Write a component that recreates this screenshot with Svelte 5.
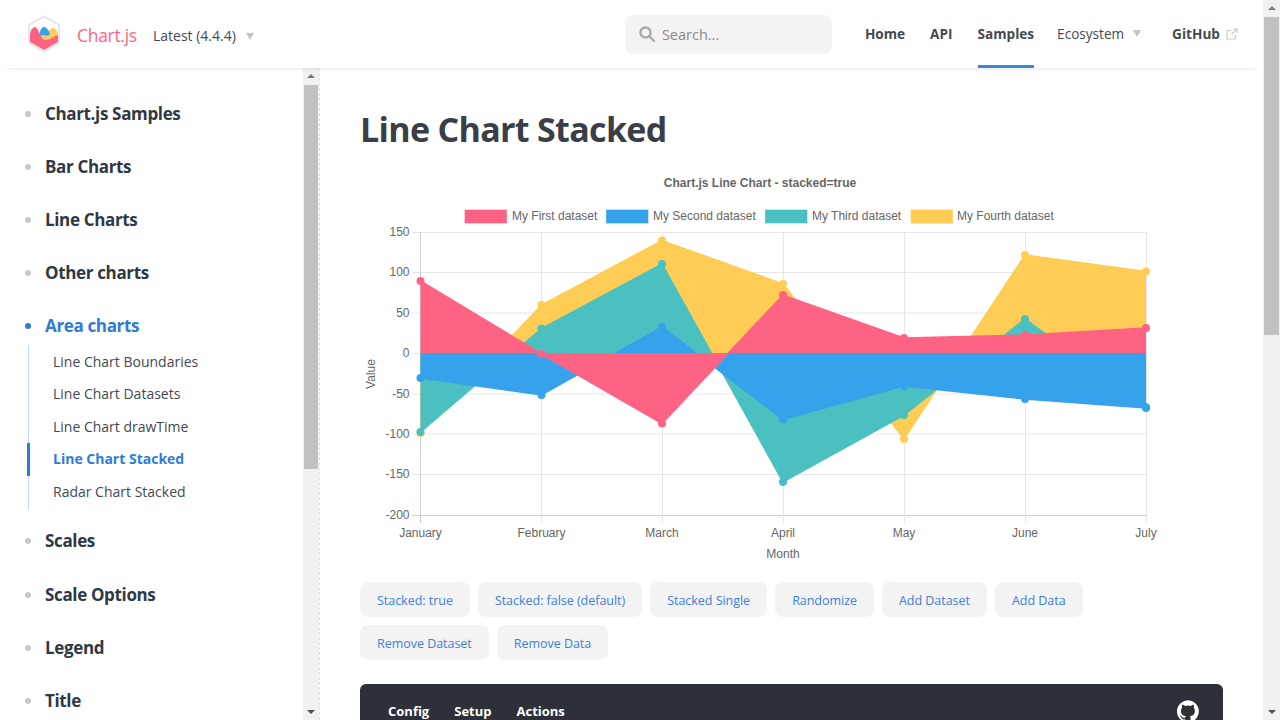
<script>
  const xs = [420.5, 541.5, 662, 783, 904, 1025, 1146];
  const ZERO = 353;
  const series = [
    { color: '#ffcd56', ys: [433, 305, 240.5, 284, 439, 255, 271.5] },
    { color: '#4bc0c0', ys: [432, 328.5, 264, 482, 415, 319, 407] },
    { color: '#36a2eb', ys: [378, 395, 327, 419.5, 386, 399, 408] },
    { color: '#ff6384', ys: [281, 354, 423.5, 295, 338, 335, 328] }
  ];
  const line = (ys) => ys.map((y, i) => `${xs[i]},${y}`).join(' ');
  const area = (ys) => `${xs[0]},${ZERO} ${line(ys)} ${xs[6]},${ZERO}`;
  const yTicks = [
    ['150', 232.5], ['100', 272.5], ['50', 313], ['0', 353.5],
    ['-50', 394], ['-100', 434], ['-150', 474.5], ['-200', 515.5]
  ];
  const months = ['January', 'February', 'March', 'April', 'May', 'June', 'July'];
  const legend = [
    ['My First dataset', '#ff6384', 464.5, 512],
    ['My Second dataset', '#36a2eb', 606, 653],
    ['My Third dataset', '#4bc0c0', 765, 812],
    ['My Fourth dataset', '#ffcd56', 910.5, 957]
  ];
  const topItems = ['Chart.js Samples', 'Bar Charts', 'Line Charts', 'Other charts'];
  const subItems = ['Line Chart Boundaries', 'Line Chart Datasets', 'Line Chart drawTime', 'Line Chart Stacked', 'Radar Chart Stacked'];
  const bottomItems = ['Scales', 'Scale Options', 'Legend', 'Title'];
  const buttons = ['Stacked: true', 'Stacked: false (default)', 'Stacked Single', 'Randomize', 'Add Dataset', 'Add Data', 'Remove Dataset', 'Remove Data'];
</script>

<div class="page">
  <div class="view">
    <header class="navbar">
      <div class="logo">
        <svg width="34" height="38" viewBox="0 0 34 38">
          <path d="M17 1.500 32 10v18L17 36.500 2 28V10Z" fill="#fff" stroke="#e4e6ea" stroke-width="2" />
          <path d="M12 20C14 17 15 16 18 20 21 18 23 13 26 13 29 13 31 17 31 22L17 30Z" fill="#fecc56" />
          <path d="M12 21C13 15 15 12 17 12 20 12 22 16 23 19 21 21 19 21 17 20 15 20 14 21 12 21Z" fill="#36a2eb" />
          <path d="M3 27V19C4 14 6 12 8 12 11 12 13 22 17 25 21 26 26 22 31 20V27L17 35Z" fill="#ff6384" />
        </svg>
      </div>
      <span class="brand">Chart.js</span>
      <span class="version">Latest (4.4.4)</span>
      <span class="caret version-caret"></span>
      <div class="search">
        <svg width="16" height="16" viewBox="0 0 16 16" fill="none" stroke="#a8a8a8" stroke-width="2.4">
          <circle cx="6.500" cy="6.500" r="5" />
          <path d="m10.500 10.500 4.500 4.500" stroke-linecap="round" />
        </svg>
        <span>Search...</span>
      </div>
      <nav class="links">
        <span class="link">Home</span>
        <span class="link">API</span>
        <span class="link active">Samples</span>
        <span class="link plain">Ecosystem<span class="caret eco-caret"></span></span>
        <span class="link">GitHub
          <svg class="ext" width="12" height="12" viewBox="0 0 12 12" fill="none" stroke="#c8c8c8" stroke-width="1.2">
            <path d="M9.500 7v4H1V2.500h4M7 1h4v4M11 1 5.500 6.500" />
          </svg>
        </span>
      </nav>
    </header>

    <div class="body">
      <aside class="sidebar">
        <div class="side-list">
          <ul class="top">
            {#each topItems as item}
              <li>{item}</li>
            {/each}
            <li class="current">Area charts</li>
          </ul>
          <ul class="sub">
            {#each subItems as item, i}
              <li class:on={i === 3}>{item}</li>
            {/each}
          </ul>
          <ul class="top lower">
            {#each bottomItems as item}
              <li>{item}</li>
            {/each}
          </ul>
        </div>
        <div class="side-scroll">
          <span class="arrow up"></span>
          <span class="side-thumb"></span>
          <span class="arrow down"></span>
        </div>
      </aside>

      <main class="content">
        <h1>Line Chart Stacked</h1>
        <svg class="chart" width="863" height="400" viewBox="360 170 863 400">
          <text class="title" x="760" y="187" text-anchor="middle">Chart.js Line Chart - stacked=true</text>
          {#each legend as [label, color, bx, tx]}
            <rect x={bx} y="209.5" width="42.500" height="14" fill={color} stroke="#fff" stroke-opacity=".35" />
            <text class="lbl" x={tx} y="220">{label}</text>
          {/each}

          {#each yTicks as [label, y]}
            <line x1="412" x2="1146.500" y1={y} y2={y} class={label === '-200' ? 'edge' : 'grid'} />
            <text class="lbl" x="409.500" y={y + 3.500} text-anchor="end">{label}</text>
          {/each}
          {#each months as m, i}
            <line x1={Math.floor(xs[i]) + 0.5} x2={Math.floor(xs[i]) + 0.5} y1="232" y2="523" class={i === 0 ? 'edge' : 'grid'} />
            <text class="lbl" x={xs[i]} y="537" text-anchor="middle">{m}</text>
          {/each}
          <text class="lbl" x="783" y="558" text-anchor="middle">Month</text>
          <text class="lbl" transform="translate(375 374) rotate(-90)" text-anchor="middle">Value</text>

          {#each series as s}
            <polygon points={area(s.ys)} fill={s.color} />
            <polyline points={line(s.ys)} fill="none" stroke={s.color} stroke-width="1.500" />
            {#each s.ys as y, i}
              <circle cx={xs[i]} cy={y} r="4" fill={s.color} />
            {/each}
          {/each}
        </svg>

        <div class="buttons">
          {#each buttons as b}
            <button type="button">{b}</button>
          {/each}
        </div>

        <div class="code">
          <span>Config</span>
          <span>Setup</span>
          <span>Actions</span>
          <svg class="gh" width="22" height="22" viewBox="0 0 24 24" fill="#fff">
            <path d="M12 .3a12 12 0 0 0-3.800 23.400c.6.1.8-.3.8-.6v-2c-3.300.7-4-1.600-4-1.600-.6-1.400-1.400-1.800-1.400-1.800-1.100-.7.1-.7.1-.7 1.200.1 1.800 1.200 1.800 1.200 1.100 1.800 2.800 1.300 3.500 1 .1-.8.400-1.300.8-1.600-2.700-.3-5.500-1.300-5.500-5.900 0-1.300.5-2.400 1.200-3.200-.1-.3-.5-1.500.1-3.200 0 0 1-.3 3.300 1.200a11.500 11.500 0 0 1 6 0c2.300-1.500 3.300-1.200 3.300-1.200.6 1.700.2 2.900.1 3.200.8.800 1.200 1.900 1.200 3.200 0 4.600-2.800 5.600-5.500 5.900.4.400.8 1.100.8 2.200v3.300c0 .3.200.7.800.6A12 12 0 0 0 12 .3Z" />
          </svg>
        </div>
      </main>
    </div>
  </div>

  <div class="page-scroll">
    <span class="arrow up"></span>
    <span class="page-thumb"></span>
    <span class="arrow down"></span>
  </div>
</div>

<style>
  :global(body) {
    margin: 0;
    background: #fff;
    overflow: hidden;
  }
  .page {
    display: flex;
    height: 720px;
    overflow: hidden;
    font-family: "Open Sans", "Noto Sans", sans-serif;
    color: #303846;
  }
  .view {
    flex: 1;
    min-width: 0;
    display: flex;
    flex-direction: column;
  }
  .navbar {
    height: 68px;
    flex: none;
    display: flex;
    align-items: center;
    padding-left: 27px;
    box-shadow: 0 5px 6px -7px rgba(0, 0, 0, 0.28);
    position: relative;
    z-index: 2;
    box-sizing: border-box;
    background: #fff;
  }
  .logo {
    display: flex;
    width: 50px;
  }
  .brand {
    color: #ff6384;
    font-size: 17.5px;
    font-weight: 500;
    letter-spacing: -0.3px;
    width: 76px;
    padding-top: 1px;
  }
  .version {
    font-size: 14px;
    font-weight: 500;
    color: #444950;
    padding-top: 3px;
  }
  .caret {
    display: inline-block;
    width: 0;
    height: 0;
    border-left: 4.5px solid transparent;
    border-right: 4.5px solid transparent;
    border-top: 7px solid #c4c4c4;
  }
  .version-caret {
    margin-left: 10px;
    margin-top: 4px;
  }
  .search {
    margin-left: 371px;
    width: 207px;
    height: 39px;
    border-radius: 8px;
    background: #f3f3f3;
    display: flex;
    align-items: center;
    gap: 7px;
    padding-left: 14px;
    box-sizing: border-box;
    font-size: 14.5px;
    color: #8a8a8a;
  }
  .links {
    margin-left: 33px;
    display: flex;
    align-self: stretch;
    gap: 25px;
    font-size: 13.6px;
    font-weight: 700;
    color: #444950;
  }
  .link {
    display: flex;
    align-items: center;
    border-bottom: 3px solid transparent;
    box-sizing: border-box;
    padding-top: 2px;
  }
  .link.active {
    border-bottom-color: #3d87d8;
  }
  .link.plain {
    font-weight: 400;
    width: 90px;
    margin-left: -2px;
  }
  .eco-caret {
    margin-left: 9px;
  }
  .ext {
    margin-left: 6px;
  }
  .body {
    flex: 1;
    min-height: 0;
    display: flex;
  }
  .sidebar {
    width: 320px;
    flex: none;
    display: flex;
    overflow: hidden;
    box-sizing: border-box;
    border-right: 1px dashed #e2e2e2;
  }
  .side-list {
    flex: 1;
    padding-top: 19px;
  }
  ul {
    list-style: none;
    margin: 0;
    padding: 0;
  }
  .top li {
    height: 53.100px;
    line-height: 53.100px;
    padding-left: 45px;
    font-size: 17px;
    font-weight: 700;
    letter-spacing: -0.35px;
    color: #303846;
    position: relative;
  }
  .top li::before {
    content: "";
    position: absolute;
    left: 25px;
    top: 24px;
    width: 6px;
    height: 6px;
    border-radius: 50%;
    background: #c8c8c8;
  }
  .top li.current {
    color: #2f7bd8;
  }
  .top li.current::before {
    background: #2f7bd8;
  }
  .sub {
    margin: -7px 0 5px 28px;
    padding-top: 0.5px;
    border-left: 1px solid #bcdcf5;
    height: 163.500px;
  }
  .sub li {
    height: 32.400px;
    line-height: 32.400px;
    padding-left: 24px;
    font-size: 14px;
    color: #444950;
    position: relative;
  }
  .sub li.on {
    color: #2f7bd8;
    font-weight: 700;
  }
  .sub li.on::before {
    content: "";
    position: absolute;
    left: -2px;
    top: 0;
    bottom: 0;
    width: 3px;
    background: #2f7bd8;
  }
  .side-scroll,
  .page-scroll {
    width: 17px;
    flex: none;
    background: #f1f1f1;
    display: flex;
    flex-direction: column;
    align-items: center;
    position: relative;
  }
  .side-scroll {
    width: 16px;
  }
  .arrow {
    position: absolute;
    left: 50%;
    margin-left: -4px;
    width: 0;
    height: 0;
    border-left: 4px solid transparent;
    border-right: 4px solid transparent;
  }
  .arrow.up {
    top: 6px;
    border-bottom: 4px solid #7a7a7a;
  }
  .arrow.down {
    bottom: 6px;
    border-top: 4px solid #505050;
  }
  .side-thumb {
    margin-top: 17px;
    width: 14px;
    height: 384px;
    background: #c1c1c1;
  }
  .page-thumb {
    margin-top: 17px;
    width: 15px;
    height: 318px;
    background: #c1c1c1;
  }
  .content {
    flex: 1;
    min-width: 0;
    padding: 0 40px;
    overflow: hidden;
  }
  h1 {
    margin: 36px 0 16px;
    height: 50px;
    line-height: 50px;
    font-size: 34px;
    font-weight: 700;
    letter-spacing: -0.67px;
    color: #3a3f47;
  }
  .chart {
    display: block;
  }
  .chart text {
    font-family: "Liberation Sans", Arial, sans-serif;
    font-size: 12px;
    fill: #666;
  }
  .chart .title {
    font-weight: 700;
  }
  .chart .grid {
    stroke: #e6e6e6;
  }
  .chart .edge {
    stroke: #ccc;
  }
  .buttons {
    display: flex;
    flex-wrap: wrap;
    gap: 8px;
    margin-top: 12px;
    width: 760px;
  }
  button {
    height: 35px;
    padding: 1px 17px 0;
    border: 0;
    border-radius: 8px;
    background: #f3f3f3;
    color: #3d80d8;
    font: 500 12.5px "Open Sans", "Noto Sans", sans-serif;
    letter-spacing: -0.03px;
  }
  .code {
    margin-top: 24px;
    height: 60px;
    background: #2d3038;
    border-radius: 6px;
    display: flex;
    gap: 25px;
    padding: 18px 24px 0 28px;
    box-sizing: border-box;
    color: #fff;
    font-size: 13px;
    font-weight: 700;
    position: relative;
  }
  .gh {
    margin-left: auto;
    margin-top: -2px;
  }
</style>
